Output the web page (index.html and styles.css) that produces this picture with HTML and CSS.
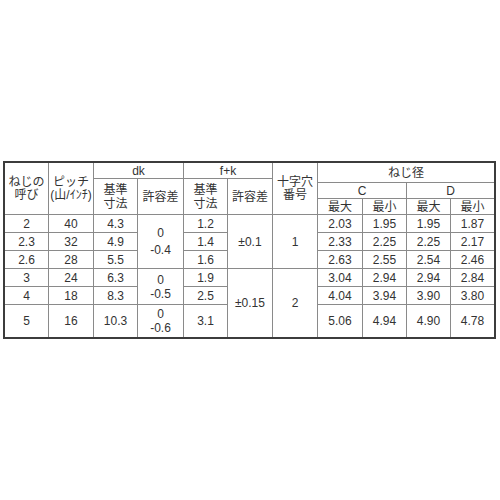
FILE: index.html
```html
<!DOCTYPE html>
<html lang="ja">
<head>
<meta charset="utf-8">
<link rel="stylesheet" href="styles.css">
</head>
<body>
<div class="spec">
  <div class="cell r4 tight">ねじの<br>呼び</div>
  <div class="cell r4 tight">ピッチ<br>(山/ｲﾝﾁ)</div>
  <div class="cell c2">dk</div>
  <div class="cell c2">f+k</div>
  <div class="cell r4 tight">十字穴<br>番号</div>
  <div class="cell c4 r2">ねじ径</div>

  <div class="cell r3 two">基準<br>寸法</div>
  <div class="cell r3">許容差</div>
  <div class="cell r3 two">基準<br>寸法</div>
  <div class="cell r3">許容差</div>

  <div class="cell c2">C</div>
  <div class="cell c2">D</div>

  <div class="cell">最大</div>
  <div class="cell">最小</div>
  <div class="cell">最大</div>
  <div class="cell">最小</div>

  <div class="cell">2</div><div class="cell">40</div><div class="cell">4.3</div>
  <div class="cell r3 loose">0<br>-0.4</div>
  <div class="cell">1.2</div>
  <div class="cell r3">±0.1</div>
  <div class="cell r3">1</div>
  <div class="cell">2.03</div><div class="cell">1.95</div><div class="cell">1.95</div><div class="cell">1.87</div>

  <div class="cell">2.3</div><div class="cell">32</div><div class="cell">4.9</div>
  <div class="cell">1.4</div>
  <div class="cell">2.33</div><div class="cell">2.25</div><div class="cell">2.25</div><div class="cell">2.17</div>

  <div class="cell">2.6</div><div class="cell">28</div><div class="cell">5.5</div>
  <div class="cell">1.6</div>
  <div class="cell">2.63</div><div class="cell">2.55</div><div class="cell">2.54</div><div class="cell">2.46</div>

  <div class="cell">3</div><div class="cell">24</div><div class="cell">6.3</div>
  <div class="cell r2 two">0<br>-0.5</div>
  <div class="cell">1.9</div>
  <div class="cell r3">±0.15</div>
  <div class="cell r3">2</div>
  <div class="cell">3.04</div><div class="cell">2.94</div><div class="cell">2.94</div><div class="cell">2.84</div>

  <div class="cell">4</div><div class="cell">18</div><div class="cell">8.3</div>
  <div class="cell">2.5</div>
  <div class="cell">4.04</div><div class="cell">3.94</div><div class="cell">3.90</div><div class="cell">3.80</div>

  <div class="cell">5</div><div class="cell">16</div><div class="cell">10.3</div>
  <div class="cell two">0<br>-0.6</div>
  <div class="cell">3.1</div>
  <div class="cell">5.06</div><div class="cell">4.94</div><div class="cell">4.90</div><div class="cell">4.78</div>
</div>
</body>
</html>
```

FILE: styles.css
```css
html, body {
  margin: 0;
  padding: 0;
  background: #ffffff;
}

body {
  padding: 161px 0 0 3px;
  font-family: "Liberation Sans", "Noto Sans CJK JP", sans-serif;
  font-size: 12px;
  color: #333333;
}

.spec {
  display: grid;
  width: 489px;
  grid-template-columns: 43px 44px 43px 45px 43px 44px 44px 44px 43px 43px 43px;
  grid-template-rows: 15px 3px 15px 15px 17px 17px 17px 17px 17px 32px;
  gap: 1px;
  background: #8a8a8a;
  border: 2px solid #3c3c3c;
}

.cell {
  background: #ffffff;
  display: flex;
  align-items: center;
  justify-content: center;
  text-align: center;
  line-height: 14px;
  white-space: nowrap;
}

.r2 { grid-row: span 2; }
.r3 { grid-row: span 3; }
.r4 { grid-row: span 4; }
.c2 { grid-column: span 2; }
.c4 { grid-column: span 4; }

.tight { line-height: 13px; }
.two { line-height: 14px; }
.loose { line-height: 17px; }
```
